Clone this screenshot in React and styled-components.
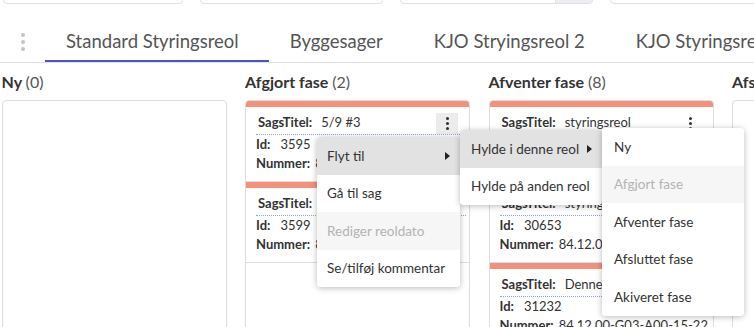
import React from "react";
import styled, { createGlobalStyle } from "styled-components";

const GlobalStyle = createGlobalStyle`
  html, body { margin: 0; padding: 0; background: #fff; }
  body { font-family: Lato, "Open Sans", sans-serif; color: #333; overflow: hidden; }
`;

const Page = styled.div`
  position: relative;
  width: 754px;
  height: 327px;
  overflow: hidden;
  display: flow-root;
`;

/* filters (scrolled mostly out of view) */
const Filters = styled.div`
  display: flex;
  margin-top: -30px;
  padding-left: 3px;
  gap: 17px;
  white-space: nowrap;
`;

const Field = styled.div`
  flex: 0 0 ${(p) => p.w}px;
  height: 34px;
  box-sizing: border-box;
  border: 1px solid #dde2e8;
  border-radius: 4px;
  display: flex;
  justify-content: flex-end;
  overflow: hidden;
`;

const FieldButton = styled.div`
  width: 36px;
  background: #eceef1;
  border-left: 1px solid #dde2e8;
`;

/* tabs */
const TabBar = styled.div`
  display: flex;
  margin-top: 19px;
  border-bottom: 1px solid #e3e3e3;
  white-space: nowrap;
  overflow: hidden;
`;

const TabKebab = styled.div`
  flex: 0 0 45px;
  display: flex;
  flex-direction: column;
  align-items: center;
  justify-content: center;
  gap: 3px;
  padding-bottom: 2px;
  span {
    width: 4px;
    height: 4px;
    border-radius: 50%;
    background: #c4c4c4;
  }
`;

const Tab = styled.div`
  flex: 0 0 auto;
  height: 37px;
  line-height: 37px;
  padding: 0 30px 0 21px;
  font-size: 18.5px;
  color: #555;
  border-bottom: 2px solid ${(p) => (p.active ? "#4a56c8" : "transparent")};
`;

/* board */
const Board = styled.div`
  display: flex;
  gap: 18.5px;
  padding-left: 1.5px;
`;

const Column = styled.div`
  flex: 0 0 225px;
  width: 225px;
  min-width: 0;
  display: flex;
  flex-direction: column;
`;

const ColumnTitle = styled.div`
  margin: 9px 0 8px;
  height: 20px;
  line-height: 20px;
  font-size: 16px;
  font-weight: 700;
  color: #333;
  white-space: nowrap;
  span {
    font-weight: 400;
    color: #555;
  }
`;

const Lane = styled.div`
  height: 240px;
  border: 1px solid #ddd;
  border-radius: 4px;
  overflow: hidden;
`;

const Card = styled.div`
  border-top: 6px solid #f4917c;
  border-bottom: 1px solid #ddd;
  padding: 4px 3px 8px 10px;
  font-size: 13px;
`;

const TitleRow = styled.div`
  display: flex;
  align-items: center;
  height: 21px;
  padding: 0 8px 2px 2px;
  border-bottom: 1px dotted #8ea6d6;
`;

const Row = styled.div`
  display: flex;
  height: 19px;
  line-height: 19px;
  white-space: nowrap;
  overflow: hidden;
`;

const Label = styled.b`
  font-weight: 700;
  margin-right: ${(p) => p.gap || 7}px;
  color: #333;
`;

const Value = styled.span`
  flex: 1;
  min-width: 0;
  white-space: nowrap;
  overflow: hidden;
  color: #333;
`;

const Kebab = styled.div`
  flex: 0 0 22px;
  height: 21px;
  margin-top: 3px;
  display: flex;
  flex-direction: column;
  align-items: center;
  justify-content: center;
  gap: 2px;
  background: ${(p) => (p.active ? "#ececec" : "transparent")};
  span {
    width: 3px;
    height: 3px;
    border-radius: 50%;
    background: #333;
  }
`;

/* context menu */
const Menu = styled.div`
  position: absolute;
  left: ${(p) => p.left};
  top: ${(p) => p.top}px;
  width: ${(p) => p.w}px;
  background: #fff;
  border-radius: 4px;
  box-shadow: 0 1px 6px rgba(0, 0, 0, 0.28);
  font-size: 13.5px;
  z-index: 10;
`;

const Item = styled.div`
  position: relative;
  display: flex;
  align-items: center;
  justify-content: space-between;
  height: 37.5px;
  padding: 0 10px 0 ${(p) => p.pad || 10}px;
  white-space: nowrap;
  color: ${(p) => (p.disabled ? "#b3b3b3" : "#333")};
  background: ${(p) => (p.hover ? "#e2e2e2" : p.disabled ? "#f6f6f6" : "#fff")};
  &:first-child { border-radius: 4px 4px 0 0; }
  &:last-child { border-radius: 0 0 4px 4px; }
`;

const Arrow = styled.i`
  width: 0;
  height: 0;
  border-left: 5px solid #222;
  border-top: 4px solid transparent;
  border-bottom: 4px solid transparent;
`;

const Dots = ({ active }) => (
  <Kebab active={active}>
    <span />
    <span />
    <span />
  </Kebab>
);

const CaseCard = ({ title, id, number, active }) => (
  <Card>
    <TitleRow>
      <Label gap={9}>SagsTitel:</Label>
      <Value>{title}</Value>
      <Dots active={active} />
    </TitleRow>
    <Row>
      <Label gap={10}>Id:</Label>
      <Value>{id}</Value>
    </Row>
    <Row>
      <Label gap={5}>Nummer:</Label>
      <Value>{number}</Value>
    </Row>
  </Card>
);

const columns = [
  { name: "Ny", count: 0, cards: [] },
  {
    name: "Afgjort fase",
    count: 2,
    cards: [
      { title: "5/9 #3", id: 3595, number: "84.12.00-G01", active: true },
      { title: "Test sag", id: 3599, number: "84.12.00-G01" },
    ],
  },
  {
    name: "Afventer fase",
    count: 8,
    cards: [
      { title: "styringsreol", id: 30651, number: "84.12.00-G03-A00-15-20" },
      { title: "styringsreol 2", id: 30653, number: "84.12.00-G03-A00-15-21" },
      { title: "Denne sag", id: 31232, number: "84.12.00-G03-A00-15-22" },
    ],
  },
  { name: "Afsluttet fase", count: 0, cards: [] },
];

export default function App() {
  return (
    <Page>
      <GlobalStyle />
      <Filters>
        <Field w={180} />
        <Field w={183} />
        <Field w={193}>
          <FieldButton />
        </Field>
        <Field w={180} />
      </Filters>

      <TabBar>
        <TabKebab>
          <span />
          <span />
          <span />
        </TabKebab>
        <Tab active>Standard Styringsreol</Tab>
        <Tab>Byggesager</Tab>
        <Tab>KJO Stryingsreol 2</Tab>
        <Tab>KJO Styringsreol</Tab>
      </TabBar>

      <Board>
        {columns.map((c) => (
          <Column key={c.name}>
            <ColumnTitle>
              {c.name} <span>({c.count})</span>
            </ColumnTitle>
            <Lane>
              {c.cards.map((card) => (
                <CaseCard key={card.id} {...card} />
              ))}
            </Lane>
          </Column>
        ))}
      </Board>

      <Menu left="317px" top={137} w={143}>
        <Item hover>
          Flyt til <Arrow />
          <Menu left="100%" top={-7} w={142}>
            <Item hover pad={11}>
              Hylde i denne reol <Arrow />
              <Menu left="100%" top={-2} w={142}>
                <Item pad={12}>Ny</Item>
                <Item pad={12} disabled>
                  Afgjort fase
                </Item>
                <Item pad={12}>Afventer fase</Item>
                <Item pad={12}>Afsluttet fase</Item>
                <Item pad={12}>Akiveret fase</Item>
              </Menu>
            </Item>
            <Item pad={11}>Hylde på anden reol</Item>
          </Menu>
        </Item>
        <Item>Gå til sag</Item>
        <Item disabled>Rediger reoldato</Item>
        <Item>Se/tilføj kommentar</Item>
      </Menu>
    </Page>
  );
}
